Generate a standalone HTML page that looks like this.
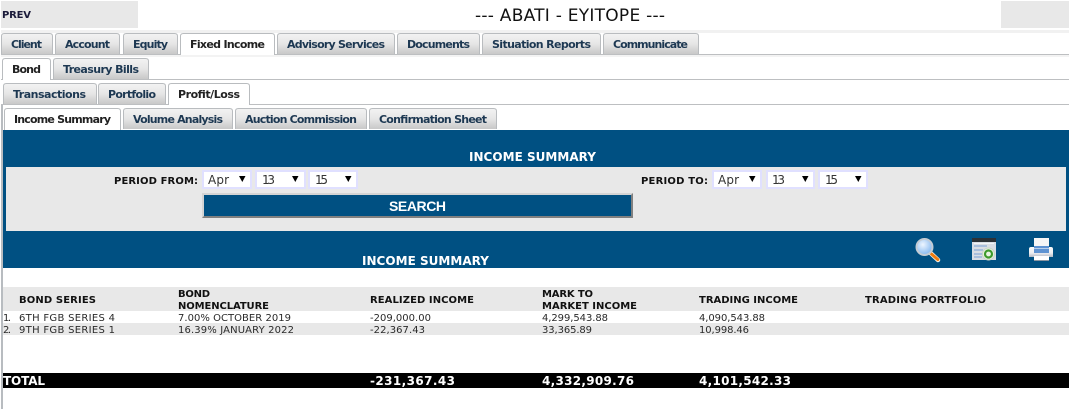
<!DOCTYPE html>
<html><head><meta charset="utf-8"><title>Income Summary</title>
<style>
html,body{margin:0;padding:0;background:#fff;width:1069px;height:411px;overflow:hidden}
svg{display:block}
text{font-family:"DejaVu Sans","Liberation Sans",sans-serif;white-space:pre}
.t{font-size:11px;font-weight:700;fill:#1d3852}
.a{fill:#222}
.h{font-size:10px;font-weight:700;fill:#111}
.r{font-size:10px;fill:#2a2a2a}
.w{font-size:12px;font-weight:700;fill:#fff}
.s{font-size:12px;fill:#333}
.tab{fill:url(#g);stroke:#b9bcbf;stroke-width:1}
.act{fill:#fff;stroke:#b9bcbf;stroke-width:1}
</style></head><body>
<svg width="1069" height="411" viewBox="0 0 1069 411" xmlns="http://www.w3.org/2000/svg">
<defs>
<linearGradient id="g" x1="0" y1="0" x2="0" y2="1"><stop offset="0" stop-color="#f3f3f3"/><stop offset=".5" stop-color="#e6e6e6"/><stop offset="1" stop-color="#c8c8c8"/></linearGradient>
<radialGradient id="lens" cx=".4" cy=".35" r=".7"><stop offset="0" stop-color="#eef6ff"/><stop offset="1" stop-color="#7fb4ee"/></radialGradient>
<linearGradient id="pb" x1="0" y1="0" x2="0" y2="1"><stop offset="0" stop-color="#fafafa"/><stop offset=".6" stop-color="#eceef2"/><stop offset="1" stop-color="#b4bac4"/></linearGradient>
</defs>
<rect width="1069" height="411" fill="#fff"/>

<!-- header -->
<rect x="1" y="1" width="137" height="27" fill="#e8e8e8"/>
<rect x="1001" y="1" width="68" height="27" fill="#e8e8e8"/>
<text x="2" y="18" font-size="10" font-weight="700" fill="#1a1a3a" textLength="29">PREV</text>
<text x="475" y="21" font-size="17" fill="#111" textLength="190">--- ABATI - EYITOPE ---</text>

<!-- row 1 -->
<rect x="1" y="30" width="1068" height="3" fill="#f1f1f1"/>
<rect x="1" y="54" width="1068" height="1" fill="#bdbfc1"/>
<rect x="1" y="55" width="1068" height="2" fill="#f3f3f3"/>
<path class="tab" d="M1.500 54V36Q1.500 33.500 4.500 33.500H49.500Q52.500 33.500 52.500 36V54"/>
<path class="tab" d="M55.500 54V36Q55.500 33.500 58.500 33.500H116.500Q119.500 33.500 119.500 36V54"/>
<path class="tab" d="M123.500 54V36Q123.500 33.500 126.500 33.500H174.500Q177.500 33.500 177.500 36V54"/>
<path class="act" d="M180.500 55V36Q180.500 33.500 183.500 33.500H271.500Q274.500 33.500 274.500 36V55"/>
<path class="tab" d="M277.500 54V36Q277.500 33.500 280.500 33.500H391.500Q394.500 33.500 394.500 36V54"/>
<path class="tab" d="M397.500 54V36Q397.500 33.500 400.500 33.500H476.500Q479.500 33.500 479.500 36V54"/>
<path class="tab" d="M482.500 54V36Q482.500 33.500 485.500 33.500H597.500Q600.500 33.500 600.500 36V54"/>
<path class="tab" d="M603.500 54V36Q603.500 33.500 606.500 33.500H695.500Q698.500 33.500 698.500 36V54"/>
<text class="t" x="11" y="48" textLength="31">Client</text>
<text class="t" x="65" y="48" textLength="45">Account</text>
<text class="t" x="133" y="48" textLength="35">Equity</text>
<text class="t a" x="190" y="48" textLength="75">Fixed Income</text>
<text class="t" x="287" y="48" textLength="98">Advisory Services</text>
<text class="t" x="407" y="48" textLength="63">Documents</text>
<text class="t" x="492" y="48" textLength="99">Situation Reports</text>
<text class="t" x="613" y="48" textLength="75">Communicate</text>

<!-- row 2 -->
<rect x="1" y="79" width="1068" height="1" fill="#bdbfc1"/>
<path class="act" d="M2.500 80V61Q2.500 58.500 5.500 58.500H47.500Q50.500 58.500 50.500 61V80"/>
<path class="tab" d="M53.500 79V61Q53.500 58.500 56.500 58.500H145.500Q148.500 58.500 148.500 61V79"/>
<text class="t a" x="12" y="73" textLength="29">Bond</text>
<text class="t" x="63" y="73" textLength="76">Treasury Bills</text>

<!-- row 3 -->
<rect x="1" y="104" width="1068" height="1" fill="#bdbfc1"/>
<path class="tab" d="M3.500 104V86Q3.500 83.500 6.500 83.500H93.500Q96.500 83.500 96.500 86V104"/>
<path class="tab" d="M98.500 104V86Q98.500 83.500 101.500 83.500H162.500Q165.500 83.500 165.500 86V104"/>
<path class="act" d="M168.500 105V86Q168.500 83.500 171.500 83.500H246.500Q249.500 83.500 249.500 86V105"/>
<text class="t" x="13" y="98" textLength="73">Transactions</text>
<text class="t" x="108" y="98" textLength="48">Portfolio</text>
<text class="t a" x="178" y="98" textLength="62">Profit/Loss</text>

<!-- left rule -->
<rect x="1" y="105" width="2" height="304" fill="#b8bcc0"/>

<!-- row 4 -->
<path class="tab" d="M123.500 129V111Q123.500 108.500 126.500 108.500H229.500Q232.500 108.500 232.500 111V129"/>
<path class="tab" d="M235.500 129V111Q235.500 108.500 238.500 108.500H363.500Q366.500 108.500 366.500 111V129"/>
<path class="tab" d="M369.500 129V111Q369.500 108.500 372.500 108.500H493.500Q496.500 108.500 496.500 111V129"/>
<path class="act" d="M4.500 130V111Q4.500 108.500 7.500 108.500H117.500Q120.500 108.500 120.500 111V130"/>
<text class="t a" x="14" y="123" textLength="97">Income Summary</text>
<text class="t" x="133" y="123" textLength="90">Volume Analysis</text>
<text class="t" x="245" y="123" textLength="112">Auction Commission</text>
<text class="t" x="379" y="123" textLength="108">Confirmation Sheet</text>

<!-- blue panel -->
<rect x="3" y="130" width="1066" height="138" fill="#005082"/>
<rect x="6" y="167" width="1060" height="64" fill="#e8e8e8"/>
<text class="w" x="469" y="161" textLength="127">INCOME SUMMARY</text>
<text class="w" x="362" y="265" textLength="127">INCOME SUMMARY</text>

<!-- period from -->
<text x="114" y="184" font-size="10" font-weight="700" fill="#111" textLength="84">PERIOD FROM:</text>
<g fill="#fff" stroke="#e0e0ff" stroke-width="2">
<rect x="203" y="171" width="48" height="17"/><rect x="256" y="171" width="49" height="17"/><rect x="309" y="171" width="48" height="17"/>
<rect x="713" y="171" width="48" height="17"/><rect x="767" y="171" width="47" height="17"/><rect x="819" y="171" width="48" height="17"/>
</g>
<text class="s" x="208" y="184" textLength="21">Apr</text><text class="s" x="262" y="184" textLength="13">13</text><text class="s" x="315" y="184" textLength="13">15</text>
<text class="s" x="718" y="184" textLength="21">Apr</text><text class="s" x="772" y="184" textLength="13">13</text><text class="s" x="825" y="184" textLength="13">15</text>
<path fill="#000" d="M239 176h6.500l-3.200 6zM292 176h6.500l-3.200 6zM345 176h6.500l-3.200 6zM749 176h6.500l-3.200 6zM802 176h6.500l-3.200 6zM855 176h6.500l-3.200 6z"/>
<text x="641" y="184" font-size="10" font-weight="700" fill="#111" textLength="67">PERIOD TO:</text>

<!-- search -->
<rect x="202" y="193" width="431" height="25" fill="#808080"/>
<path d="M202 193h431l-2 2H204v21l-2 2z" fill="#d4d4d4"/>
<rect x="204" y="195" width="427" height="21" fill="#005082"/>
<text x="389" y="211" style="font-family:'Liberation Sans',sans-serif" font-size="14" font-weight="700" fill="#fff" textLength="57">SEARCH</text>

<!-- magnifier -->
<path d="M930 252.500L938 260" stroke="#f4f0e4" stroke-width="4.500" stroke-linecap="round"/>
<path d="M931.500 254L937.800 259.500" stroke="#f07c10" stroke-width="3" stroke-linecap="round"/>
<circle cx="924.500" cy="247" r="8" fill="url(#lens)" stroke="#c4ccd4" stroke-width="2"/>

<!-- window icon -->
<rect x="972" y="239" width="24" height="21" fill="#d9dde4"/>
<rect x="972" y="238" width="24" height="4" fill="#2c3136"/>
<rect x="974" y="243" width="20" height="1" fill="#f2f4f7"/>
<g fill="#a9bedc"><rect x="974" y="245" width="13" height="2"/><rect x="974" y="249" width="9" height="2"/><rect x="974" y="253" width="8" height="2"/><rect x="974" y="256" width="8" height="2"/></g>
<circle cx="988.500" cy="254" r="6" fill="#e8f2e0" stroke="#c8d4c8" stroke-width="1"/>
<circle cx="988.500" cy="254" r="3.500" fill="none" stroke="#3d9a2c" stroke-width="2.200"/>

<!-- printer -->
<rect x="1034" y="238" width="15" height="9" fill="#f6f6f6"/>
<path d="M1031 247h20q2 0 2 2v8h-24v-8q0-2 2-2z" fill="url(#pb)"/>
<rect x="1034" y="246" width="15" height="7" fill="#5f93d2"/>
<rect x="1034" y="248" width="15" height="1" fill="#b8cfea"/>
<rect x="1034" y="256" width="15" height="4" fill="#fff"/>
<rect x="1034" y="260" width="15" height="1" fill="#8a94a0"/>

<!-- table -->
<rect x="3" y="287" width="1066" height="24" fill="#e8e8e8"/>
<rect x="3" y="323" width="1066" height="12" fill="#e8e8e8"/>
<text class="h" x="19" y="303" textLength="77">BOND SERIES</text>
<text class="h" x="178" y="297" textLength="32">BOND</text>
<text class="h" x="178" y="309" textLength="91">NOMENCLATURE</text>
<text class="h" x="370" y="303" textLength="104">REALIZED INCOME</text>
<text class="h" x="542" y="297" textLength="51">MARK TO</text>
<text class="h" x="542" y="309" textLength="95">MARKET INCOME</text>
<text class="h" x="699" y="303" textLength="99">TRADING INCOME</text>
<text class="h" x="865" y="303" textLength="121">TRADING PORTFOLIO</text>

<text class="r" x="3" y="321" textLength="8">1.</text>
<text class="r" x="19" y="321" textLength="96">6TH FGB SERIES 4</text>
<text class="r" x="178" y="321" textLength="113">7.00% OCTOBER 2019</text>
<text class="r" x="370" y="321" textLength="61">-209,000.00</text>
<text class="r" x="542" y="321" textLength="66">4,299,543.88</text>
<text class="r" x="699" y="321" textLength="66">4,090,543.88</text>

<text class="r" x="3" y="333" textLength="8">2.</text>
<text class="r" x="19" y="333" textLength="96">9TH FGB SERIES 1</text>
<text class="r" x="178" y="333" textLength="116">16.39% JANUARY 2022</text>
<text class="r" x="370" y="333" textLength="55">-22,367.43</text>
<text class="r" x="542" y="333" textLength="50">33,365.89</text>
<text class="r" x="699" y="333" textLength="50">10,998.46</text>

<rect x="3" y="373" width="1066" height="15" fill="#000"/>
<text class="w" x="3" y="385" textLength="42">TOTAL</text>
<text class="w" x="370" y="385" textLength="85">-231,367.43</text>
<text class="w" x="542" y="385" textLength="92">4,332,909.76</text>
<text class="w" x="699" y="385" textLength="92">4,101,542.33</text>
</svg>
</body></html>
